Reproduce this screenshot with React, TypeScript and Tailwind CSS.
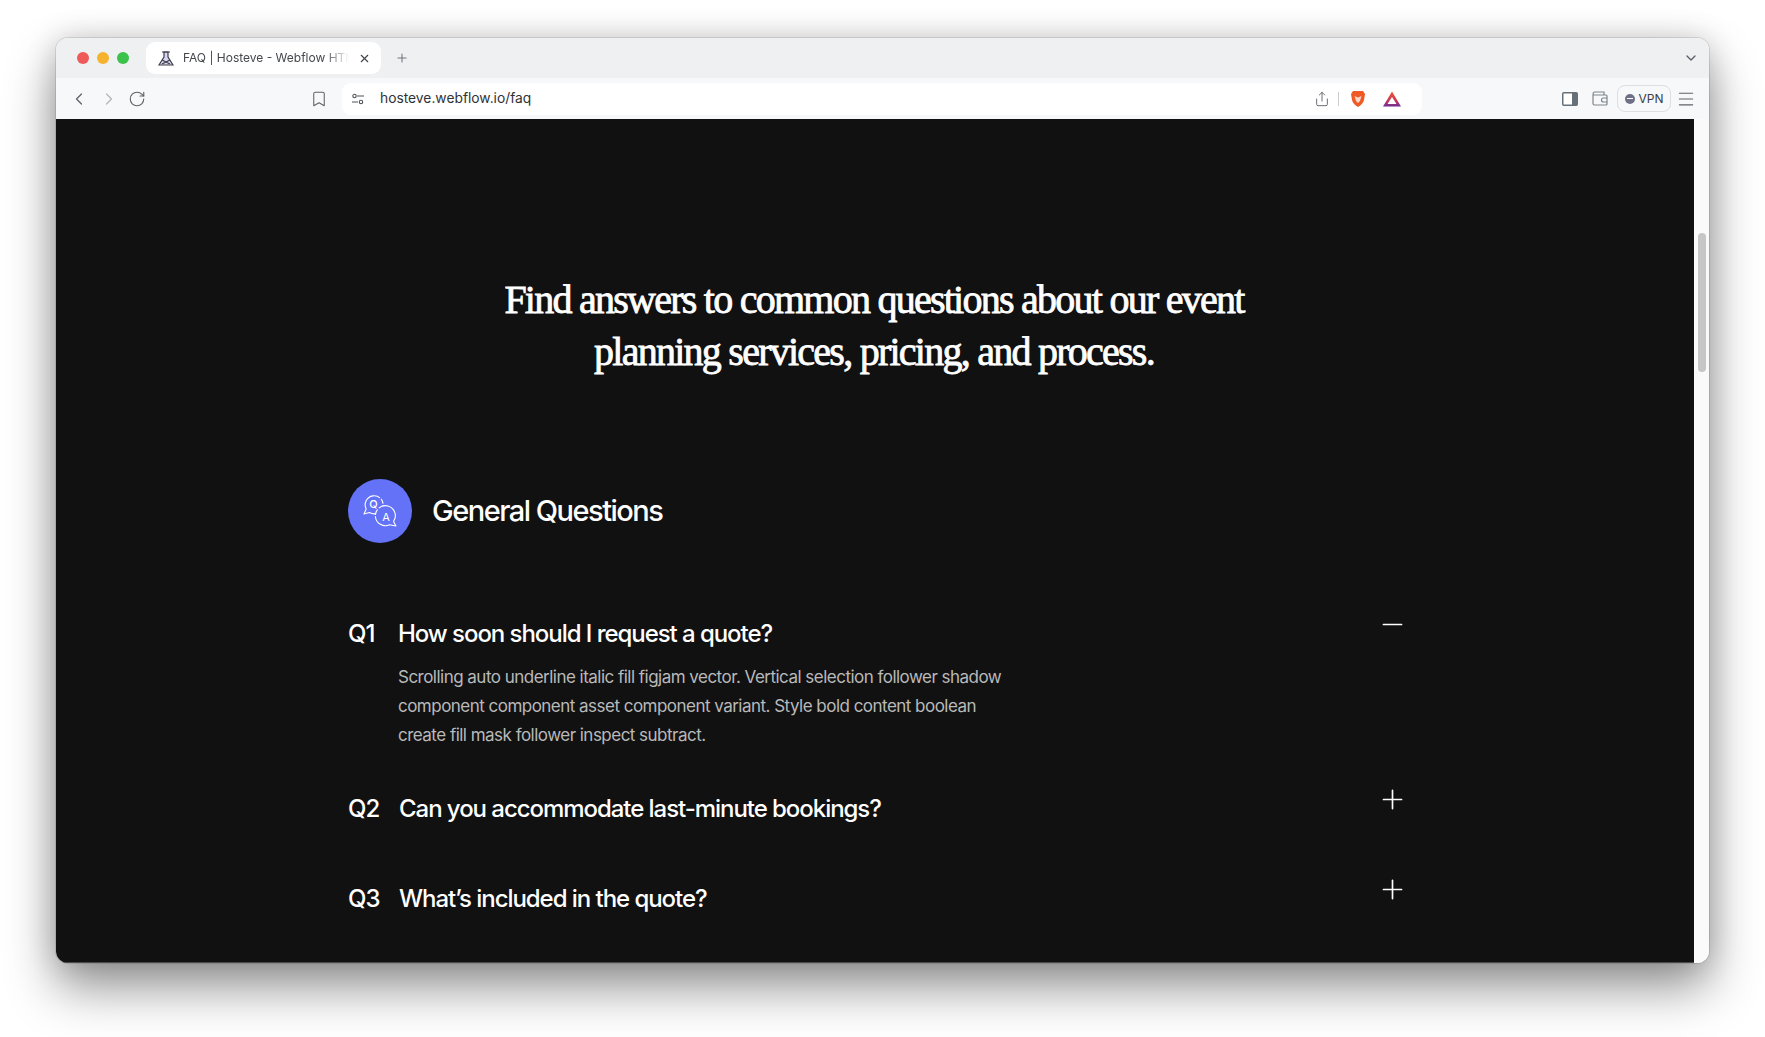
import React from 'react';
import { ChevronDown, ChevronLeft, ChevronRight, Minus, Plus, RotateCw, Bookmark, Menu, Share, X } from 'lucide-react';

const faqs = [
  { id: 'Q1', q: 'How soon should I request a quote?', open: true },
  { id: 'Q2', q: 'Can you accommodate last-minute bookings?', open: false },
  { id: 'Q3', q: 'What’s included in the quote?', open: false },
];

const QaIcon = () => (
  <svg width="34" height="32" viewBox="0 0 34 32" fill="none" stroke="white" strokeWidth="1.1" strokeLinejoin="round">
    <path d="M1 19 L3.2 14 A9 9 0 1 1 6.5 17.5 Z" strokeDasharray="30 1.5 5 1.5" />
    <path d="M33 31 L30.5 26.5 A10 10 0 1 0 26.5 29.8 Z" fill="#6372f6" strokeDasharray="34 1.5 6 1.5" />
    <text x="10.5" y="13" fill="white" stroke="none" fontSize="11" fontWeight="500" fontFamily="Inter, sans-serif" textAnchor="middle">Q</text>
    <text x="23" y="25.5" fill="white" stroke="none" fontSize="11" fontWeight="400" fontFamily="Inter, sans-serif" textAnchor="middle">A</text>
  </svg>
);

const FaqRow = ({ id, q, open }: { id: string; q: string; open: boolean }) => (
  <div>
    <div className="flex items-start justify-between">
      <div className="flex items-center text-[24px] leading-[32px] font-medium tracking-[-1.05px] text-white">
        <span className={open ? 'w-[50px]' : 'w-[51px]'}>{id}</span>
        <span>{q}</span>
      </div>
      <div className="-mt-[9px]">
        {open ? (
          <Minus size={31} strokeWidth={1.3} className="text-white" />
        ) : (
          <Plus size={31} strokeWidth={1.3} className="text-white" />
        )}
      </div>
    </div>
    {open && (
      <p className="mt-[13px] -mb-[15px] ml-[50px] w-[625px] text-[17px] leading-[29px] tracking-[-0.52px] text-[#b9b9b9]">
        Scrolling auto underline italic fill figjam vector. Vertical selection follower shadow component component asset
        component variant. Style bold content boolean create fill mask follower inspect subtract.
      </p>
    )}
  </div>
);

export default function App() {
  return (
    <div className="h-[1037px] w-[1765px] overflow-hidden bg-white pt-[38px] pl-[56px] font-['Inter',sans-serif]">
      <div className="flex h-[925px] w-[1653px] flex-col overflow-hidden rounded-[12px] shadow-[0_0_0_1px_rgba(0,0,0,0.1),0_25px_50px_rgba(0,0,0,0.42),0_0_30px_rgba(0,0,0,0.16)]">
        {/* tab strip */}
        <div className="flex h-[40px] items-end bg-[#eef0f2] pl-[21px]">
          <div className="mb-[14px] flex gap-[8px]">
            <div className="h-[12px] w-[12px] rounded-full bg-[#ee5a5a]" />
            <div className="h-[12px] w-[12px] rounded-full bg-[#f5b32e]" />
            <div className="h-[12px] w-[12px] rounded-full bg-[#3cc14a]" />
          </div>
          <div className="mb-[4px] ml-[17px] flex h-[32px] w-[235px] items-center rounded-[9px] bg-white pl-[12px] pr-[10px]">
            <svg width="16" height="16" viewBox="0 0 16 16" fill="none" stroke="#3c3c46" strokeWidth="1.2">
              <path d="M1 15 H15 L10 7 V2 H6 V7 Z" fill="#d9d6f2" />
              <path d="M4 2 H12 M4 10 L12 14 M12 10 L4 14" />
            </svg>
            <span className="ml-[9px] w-[166px] overflow-hidden whitespace-nowrap text-[12px] text-[#45484d] [mask-image:linear-gradient(to_right,black_85%,transparent)]">
              FAQ | Hosteve - Webflow HTML Website Template
            </span>
            <X size={13} strokeWidth={2} className="ml-auto text-[#3d4045]" />
          </div>
          <Plus size={14} strokeWidth={1.8} className="mb-[13px] ml-[14px] text-[#70757a]" />
          <ChevronDown size={16} strokeWidth={2} className="mb-[12px] ml-auto mr-[10px] text-[#5a5f66]" />
        </div>

        {/* toolbar */}
        <div className="flex h-[41px] items-center bg-[#f6f8f9] pl-[13px]">
          <ChevronLeft size={20} strokeWidth={1.5} className="text-[#5f6368]" />
          <ChevronRight size={20} strokeWidth={1.5} className="ml-[10px] text-[#b4b7bb]" />
          <RotateCw size={18} strokeWidth={1.5} className="ml-[9px] text-[#5f6368]" />
          <Bookmark size={18} strokeWidth={1.4} className="ml-[164px] text-[#5f6368]" />
          <div className="ml-[14px] flex h-[32px] w-[1080px] items-center rounded-[9px] bg-white pl-[9px] pr-[21px]">
            <svg width="14" height="14" viewBox="0 0 14 14" fill="none" stroke="#50555a" strokeWidth="1.1">
              <circle cx="3.5" cy="4" r="1.7" />
              <path d="M6 4 H13 M1 10 H7" />
              <circle cx="10" cy="10" r="1.7" />
            </svg>
            <span className="ml-[15px] text-[13.8px] text-[#2f3337]">hosteve.webflow.io/faq</span>
            <Share size={16} strokeWidth={1.4} className="ml-auto text-[#5f6368]" />
            <div className="ml-[8px] h-[14px] w-px bg-[#c9cccf]" />
            <svg width="16" height="18" viewBox="0 0 16 18" className="ml-[11px]">
              <path d="M3 1 H13 L15 4 L14 10 Q13 14 8 17 Q3 14 2 10 L1 4 Z" fill="#ef5a24" />
              <path d="M4.5 6 L8 7.5 L11.5 6 L10 11 L8 13 L6 11 Z" fill="#fbd9c8" />
            </svg>
            <svg width="18" height="16" viewBox="0 0 18 16" className="ml-[17px]">
              <defs>
                <linearGradient id="batFill" x1="0" y1="0" x2="0" y2="1">
                  <stop offset="0" stopColor="#f0532b" />
                  <stop offset="0.6" stopColor="#c93a5a" />
                  <stop offset="1" stopColor="#6d2a92" />
                </linearGradient>
              </defs>
              <path fillRule="evenodd" d="M9 0.5 L18 15.5 H0 Z M9 6 L4.5 13 H13.5 Z" fill="url(#batFill)" />
            </svg>
          </div>
          <svg width="16" height="14" viewBox="0 0 16 14" className="ml-[140px]">
            <rect x="0.75" y="0.75" width="14.5" height="12.5" rx="1" fill="#fff" stroke="#667078" strokeWidth="1.5" />
            <rect x="10" y="1" width="5" height="12" fill="#667078" />
          </svg>
          <svg width="16" height="15" viewBox="0 0 16 15" fill="none" stroke="#7d858b" strokeWidth="1.2" className="ml-[14px]">
            <path d="M1 4 V12.5 Q1 14 2.5 14 H14 Q15 14 15 13 V5 Q15 4 14 4 H2 Q1 4 1 3 Q1 1.5 2.5 1 L12 1 V4" />
            <path d="M15 7 H11.5 A2 2 0 0 0 11.5 11 H15" />
          </svg>
          <div className="ml-[9px] flex h-[27px] w-[54px] items-center justify-center gap-[4px] rounded-[8px] border border-[#dcdfe2] text-[12px] text-[#3b3f44]">
            <div className="flex h-[10px] w-[10px] items-center justify-center rounded-full bg-[#6f7087]">
              <div className="h-[1.5px] w-[6px] bg-white" />
            </div>
            VPN
          </div>
          <Menu size={20} strokeWidth={1.3} className="ml-[5px] text-[#5f6368]" />
        </div>

        <div className="flex flex-1 overflow-hidden">
          {/* page */}
          <div className="flex-1 overflow-hidden border-b border-[#4a4a4a] bg-[#111112] pt-[155px]">
            <h1 className="pr-[2px] text-center font-['Liberation_Serif',serif] text-[40px] leading-[52px] font-normal tracking-[-1.75px] text-white [-webkit-text-stroke:0.8px_white]">
              Find answers to common questions about our event
              <br />
              planning services, pricing, and process.
            </h1>
            <div className="ml-[292px] mt-[101px] w-[1060px]">
              <div className="flex items-center gap-[20px]">
                <div className="flex h-[64px] w-[64px] items-center justify-center rounded-full bg-[#6372f6]">
                  <QaIcon />
                </div>
                <h2 className="text-[29px] font-medium tracking-[-1.5px] text-white">General Questions</h2>
              </div>
              <div className="mt-[75px] flex flex-col gap-[58px]">
                {faqs.map((f) => (
                  <FaqRow key={f.id} {...f} />
                ))}
              </div>
            </div>
          </div>
          {/* scrollbar */}
          <div className="w-[15px] bg-[#fafafa] pt-[114px] pl-[4px]">
            <div className="h-[139px] w-[8px] rounded-full bg-[#c6c6c6]" />
          </div>
        </div>
      </div>
    </div>
  );
}
